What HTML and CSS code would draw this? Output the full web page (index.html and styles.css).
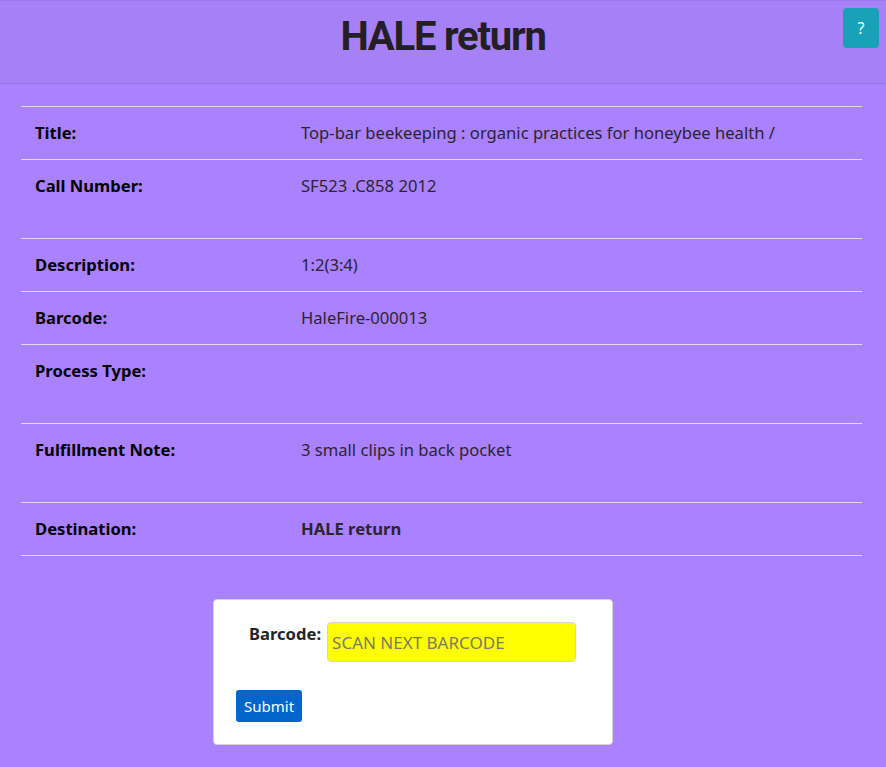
FILE: index.html
```html
<!DOCTYPE html>
<html lang="en">
<head>
<meta charset="utf-8">
<title>HALE return</title>
<link rel="stylesheet" href="styles.css">
</head>
<body>
<header class="page-header">
  <h1 class="page-title">HALE return</h1>
  <button class="help-btn" type="button">?</button>
</header>
<main class="content">
  <table class="info-table">
    <tbody>
      <tr><th>Title:</th><td>Top-bar beekeeping : organic practices for honeybee health /</td></tr>
      <tr class="tall"><th>Call Number:</th><td>SF523 .C858 2012</td></tr>
      <tr><th>Description:</th><td>1:2(3:4)</td></tr>
      <tr><th>Barcode:</th><td>HaleFire-000013</td></tr>
      <tr class="tall"><th>Process Type:</th><td></td></tr>
      <tr class="tall"><th>Fulfillment Note:</th><td>3 small clips in back pocket</td></tr>
      <tr><th>Destination:</th><td class="strong">HALE return</td></tr>
    </tbody>
  </table>
  <form class="scan-card">
    <div class="scan-row">
      <label class="scan-label" for="bc">Barcode:</label>
      <input class="scan-input" id="bc" type="text" placeholder="SCAN NEXT BARCODE">
    </div>
    <button class="submit-btn" type="button">Submit</button>
  </form>
</main>
</body>
</html>
```
FILE: styles.css
```css
* { box-sizing: border-box; }
html, body { margin: 0; padding: 0; }
body {
  background: #aa81ff;
  font-family: "Segoe UI", "Noto Sans", "Open Sans", sans-serif;
  font-size: 16.6px;
  color: #212529;
  min-height: 767px;
}
.page-header {
  position: relative;
  background: #a680f7;
  border-top: 1px solid #9a77ea;
  border-bottom: 1px solid #9674e2;
  padding: 12px 0 22px;
  height: 84px;
}
.page-title {
  margin: 0;
  text-align: center;
  font-family: Roboto, "Noto Sans", sans-serif;
  font-size: 40px;
  line-height: 48px;
  font-weight: 700;
  letter-spacing: -1.2px;
  color: #231f24;
}
.help-btn {
  position: absolute;
  top: 7px;
  right: 7px;
  width: 36px;
  height: 40px;
  border: none;
  border-radius: 4px;
  background: #17a2b8;
  color: #fff;
  font-family: inherit;
  font-size: 16px;
  padding: 0;
}
.content {
  padding: 22px 24px 0 21px;
}
.info-table {
  width: 100%;
  border-collapse: collapse;
}
.info-table th, .info-table td {
  border-top: 1px solid #dcd8ee;
  border-bottom: 1px solid #dcd8ee;
  padding: 13px 14px;
  line-height: 26px;
  vertical-align: top;
  text-align: left;
}
.info-table th {
  width: 266px;
  font-weight: 700;
  color: #000;
}
.info-table td { color: #2a2530; }
.info-table td.strong { font-weight: 700; }
.info-table tr.tall th, .info-table tr.tall td { padding-bottom: 39px; }
.scan-card {
  width: 400px;
  margin: 43px 0 0 192px;
  background: #fff;
  border: 1px solid #d4d4dc;
  border-radius: 4px;
  padding: 22px;
}
.scan-row {
  display: flex;
  align-items: flex-start;
  gap: 6px;
  padding-left: 13px;
}
.scan-label {
  font-weight: 700;
  color: #212529;
  line-height: 24px;
}
.scan-input {
  width: 249px;
  height: 40px;
  background: #ffff00;
  border: 1px solid #ced4da;
  border-radius: 4px;
  font-family: inherit;
  font-size: 17px;
  padding: 0 4px;
  color: #495057;
}
.scan-input::placeholder { color: #7a7a6a; }
.submit-btn {
  margin-top: 28px;
  background: #0066cc;
  color: #fff;
  border: none;
  border-radius: 3px;
  font-family: inherit;
  font-size: 15px;
  line-height: 24px;
  padding: 4px 8px;
}
```
